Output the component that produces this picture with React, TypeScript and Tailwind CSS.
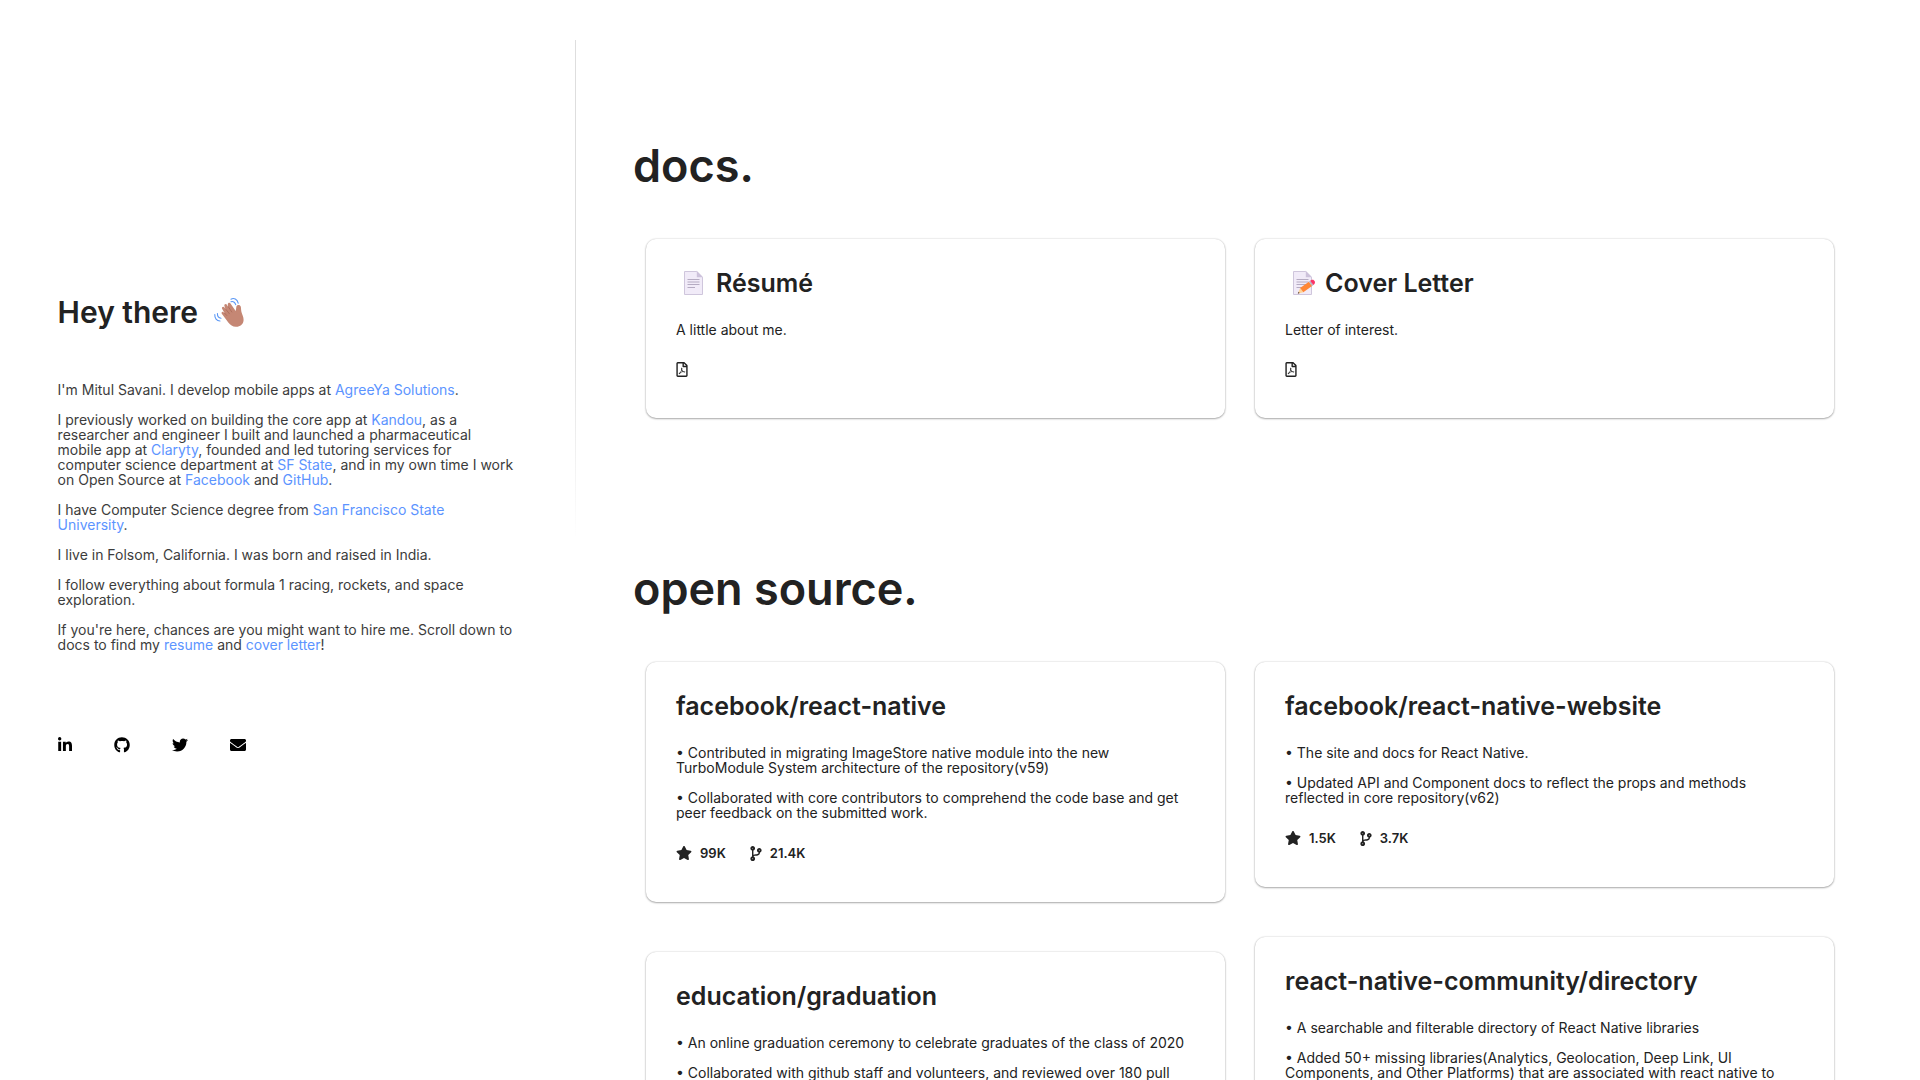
import type { ReactNode } from "react";
import {
  FaCodeBranch,
  FaEnvelope,
  FaGithub,
  FaLinkedinIn,
  FaRegFilePdf,
  FaStar,
  FaTwitter,
} from "react-icons/fa";

function WavingHand() {
  return (
    <svg viewBox="0 0 30 30" className="size-[30px]" role="img" aria-label="Waving hand">
      <g fill="none" stroke="#5a97f5" strokeWidth="1.1" strokeLinecap="round">
        <path d="M17 2.2c2.8-1.6 6.300 0 7.200 4" />
        <path d="M17 4.800c2-.9 4 .3 4.700 2.800" />
        <path d="M.8 17.500c-.2 3.600 1.800 6.400 5.200 6.500" />
        <path d="M3.400 16.500c0 2.400 1.200 4.400 3.600 4.800" />
      </g>
      <path
        fill="#c58774"
        d="M7.800 16.800c-.9-1.100.5-2.600 1.700-1.600l1.100 1-2.500-4.500c-.8-1.500 1.300-2.700 2.300-1.300l.9 1.400-.9-2.700c-.6-1.800 1.700-2.800 2.600-1.200l1 1.900-.2-2.200c-.1-2 2.200-2.400 3-.7l4.900 7.200c.4-1.700.5-3.400.7-4.600.3-1.800 3.200-2.200 4.200-.3.600 1.100.3 3 .8 5.500.6 2.500 2.300 5.200 2.200 8.300-.2 4.500-3.700 7-7.800 6.800-3.300-.1-5.300-1.700-7.500-4.300z"
      />
      <g fill="none" stroke="#a96a59" strokeWidth=".8" strokeLinecap="round">
        <path d="m10.600 16.200 2.200 2.300M12 12.500l3.400 4.300M14.400 9.800l3.400 5.200" />
      </g>
    </svg>
  );
}

function Page({ withPencil = false }: { withPencil?: boolean }) {
  return (
    <svg viewBox="0 0 26 26" className="size-[26px]" aria-hidden="true">
      <path fill="#f1ebf8" stroke="#cfc6dc" strokeWidth="1" d="M2.500 1.500h12.300l5.700 5.700v17.300h-18z" />
      <path fill="#cdc2db" d="M14.800 1v6.300H21z" />
      <path stroke="#b5abc2" strokeWidth="1" d="M5.500 9.500h12M5.500 12h12M5.500 14.500h12M5.500 17.500h7.500" />
      {withPencil && (
        <g>
          <path fill="#ffd59a" d="m6.800 23.700 2.300-5.700 3.200 4.200z" />
          <path fill="#4a3a3a" d="m6.800 23.700.8-1.900 1 1.300z" />
          <path fill="#ff8736" d="m9.100 18 8.800-6.300 3.200 4.200-8.800 6.300z" />
          <path fill="#b9b3c4" d="m17.900 11.700 1.200-.9 3.200 4.200-1.200.9z" />
          <path fill="#fb3466" d="m19.100 10.800.9-.6c2.700-1.600 5.300 1.800 3.200 4.100l-.9.700z" />
        </g>
      )}
    </svg>
  );
}

function TextLink({ children }: { children: ReactNode }) {
  return (
    <a href="#" className="text-[#5c94ff] hover:underline">
      {children}
    </a>
  );
}

function Card({ title, icon, children }: { title: string; icon?: ReactNode; children: ReactNode }) {
  return (
    <article className="rounded-[10px] bg-white px-[30px] pt-[25px] pb-[39px] shadow-[0_1px_2px_rgba(0,0,0,0.3),0_0_2px_rgba(0,0,0,0.2)]">
      <h2 className="flex items-center gap-2 text-[25px] leading-[38px] font-semibold">
        {icon && <span className="ml-[6px]">{icon}</span>}
        {title}
      </h2>
      <div className="mt-5 flex flex-col gap-[15px]">{children}</div>
    </article>
  );
}

function PdfLink({ label }: { label: string }) {
  return (
    <a href="#" aria-label={label} className="mt-[7px] flex h-5 w-3 items-center">
      <FaRegFilePdf className="h-[15px] w-auto" />
    </a>
  );
}

function Stats({ stars, forks }: { stars: string; forks: string }) {
  return (
    <div className="mt-2 flex h-5 items-center gap-6 text-[13px] leading-5 font-semibold">
      <span className="flex items-center gap-2">
        <FaStar className="size-4" aria-label="Stars" />
        {stars}
      </span>
      <span className="flex items-center gap-2">
        <FaCodeBranch className="h-[15px] w-3" aria-label="Forks" />
        {forks}
      </span>
    </div>
  );
}

function Section({ title, children }: { title: string; children: ReactNode }) {
  return (
    <section>
      <h1 className="text-[45px] leading-[60px] font-semibold">{title}</h1>
      <div className="mt-[43px] grid grid-cols-2 items-start gap-[30px] pl-[13px]">{children}</div>
    </section>
  );
}

const socials = [
  { label: "LinkedIn", Icon: FaLinkedinIn, size: "h-4 w-3.5" },
  { label: "GitHub", Icon: FaGithub, size: "size-4" },
  { label: "Twitter", Icon: FaTwitter, size: "size-4" },
  { label: "Email", Icon: FaEnvelope, size: "size-4" },
];

export default function App() {
  return (
    <div className="flex min-h-screen items-start bg-white font-['Inter',sans-serif] text-sm leading-[15px] text-[#222]">
      <aside className="w-[30%] shrink-0 pt-[292px] pr-10 pl-[3%]">
        <h2 className="flex items-center gap-4 text-[30px] leading-10 font-semibold">
          Hey there <WavingHand />
        </h2>
        <div className="mt-[50px] flex flex-col gap-[15px] whitespace-nowrap text-[#3c3c3c]">
          <p>
            I'm Mitul Savani. I develop mobile apps at <TextLink>AgreeYa Solutions</TextLink>.
          </p>
          <p>
            I previously worked on building the core app at <TextLink>Kandou</TextLink>, as a
            <br />
            researcher and engineer I built and launched a pharmaceutical
            <br />
            mobile app at <TextLink>Claryty</TextLink>, founded and led tutoring services for
            <br />
            computer science department at <TextLink>SF State</TextLink>, and in my own time I work
            <br />
            on Open Source at <TextLink>Facebook</TextLink> and <TextLink>GitHub</TextLink>.
          </p>
          <p>
            I have Computer Science degree from{" "}
            <TextLink>
              San Francisco State
              <br />
              University
            </TextLink>
            .
          </p>
          <p>I live in Folsom, California. I was born and raised in India.</p>
          <p>
            I follow everything about formula 1 racing, rockets, and space
            <br />
            exploration.
          </p>
          <p>
            If you're here, chances are you might want to hire me. Scroll down to
            <br />
            docs to find my <TextLink>resume</TextLink> and <TextLink>cover letter</TextLink>!
          </p>
        </div>
        <nav className="mt-[85px] flex gap-[42px] text-black">
          {socials.map(({ label, Icon, size }) => (
            <a key={label} href="#" aria-label={label}>
              <Icon className={size} />
            </a>
          ))}
        </nav>
      </aside>

      <div className="-ml-px mt-10 h-[500px] w-px shrink-0 bg-linear-to-b from-[#dedede] from-60% to-transparent" />

      <main className="flex min-w-0 flex-1 flex-col gap-[141px] pt-[136px] pr-[86px] pl-[57px]">
        <Section title="docs.">
          <Card title="Résumé" icon={<Page />}>
            <p>A little about me.</p>
            <PdfLink label="Résumé PDF" />
          </Card>
          <Card title="Cover Letter" icon={<Page withPencil />}>
            <p>Letter of interest.</p>
            <PdfLink label="Cover letter PDF" />
          </Card>
        </Section>

        <Section title="open source.">
          <div className="flex flex-col gap-[50px]">
            <Card title="facebook/react-native">
              <p>
                • Contributed in migrating ImageStore native module into the new
                <br />
                TurboModule System architecture of the repository(v59)
              </p>
              <p>
                • Collaborated with core contributors to comprehend the code base and get
                <br />
                peer feedback on the submitted work.
              </p>
              <Stats stars="99K" forks="21.4K" />
            </Card>
            <Card title="education/graduation">
              <p>• An online graduation ceremony to celebrate graduates of the class of 2020</p>
              <p>• Collaborated with github staff and volunteers, and reviewed over 180 pull</p>
            </Card>
          </div>
          <div className="flex flex-col gap-[50px]">
            <Card title="facebook/react-native-website">
              <p>• The site and docs for React Native.</p>
              <p>
                • Updated API and Component docs to reflect the props and methods
                <br />
                reflected in core repository(v62)
              </p>
              <Stats stars="1.5K" forks="3.7K" />
            </Card>
            <Card title="react-native-community/directory">
              <p>• A searchable and filterable directory of React Native libraries</p>
              <p>
                • Added 50+ missing libraries(Analytics, Geolocation, Deep Link, UI
                <br />
                Components, and Other Platforms) that are associated with react native to
              </p>
            </Card>
          </div>
        </Section>
      </main>
    </div>
  );
}
